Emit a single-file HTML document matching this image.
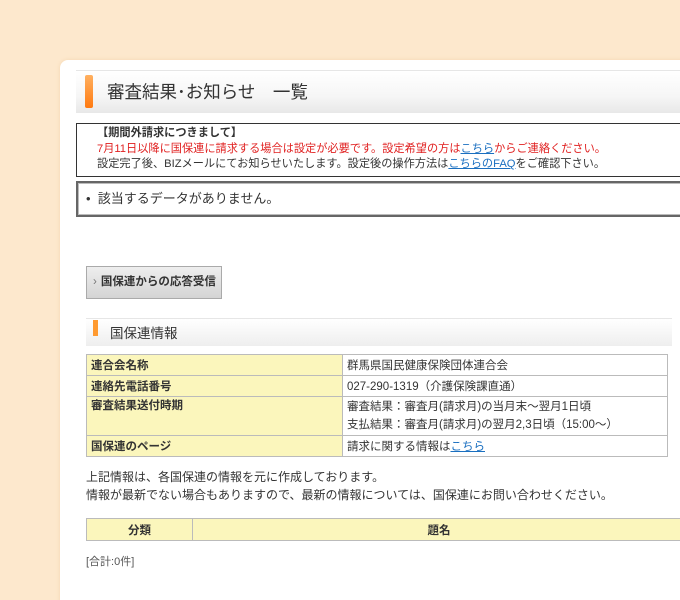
<!DOCTYPE html>
<html style="overflow:hidden"><head><meta charset="utf-8"><style>
body{margin:0;width:680px;height:600px;overflow:hidden;background:#fde8cd;font-family:"Liberation Sans","Noto Sans CJK JP",sans-serif;color:#333;position:relative}
.p{position:absolute;left:60px;top:60px;width:640px;height:560px;background:#fff;border-radius:8px;box-shadow:0 0 4px #f3d6b0}
.a{position:absolute}
.hd{left:76px;top:70px;width:604px;height:42px;background:linear-gradient(#fff,#f6f6f6 60%,#e8e8e8);border-top:1px solid #e6e6e6}
.ob{left:85px;top:75px;width:8px;height:33px;background:linear-gradient(#ffb060,#ff7a10);border-radius:2px}
.t{left:107px;top:79px;font-size:17.5px;color:#333}
.nb{left:76px;top:123px;width:604px;height:52px;border:1px solid #333;border-right:none;font-size:11.2px;line-height:15.5px}
.b2{left:76px;top:181px;width:604px;height:32px;border:2px solid #666;border-right:none;box-shadow:inset 0 0 0 1px #bbb;font-size:13px}
a{color:#1a6fc0;text-decoration:underline}
.btn{left:86px;top:266px;width:134px;height:31px;border:1px solid #aaa;background:linear-gradient(#eee,#d4d4d4);font-size:11.5px;font-weight:bold;line-height:31px;color:#333}
.sh{left:86px;top:318px;width:586px;height:27px;background:linear-gradient(#fff,#eee);border-top:1px solid #e6e6e6}
table{border-collapse:collapse;font-size:11.5px}
td{border:1px solid #bbb;padding:0 4px;height:20px}
td.k{background:#fbf6bc;font-weight:bold;width:247px;color:#333}
</style></head><body>
<div class="p"></div>
<div class="a hd"></div><div class="a ob"></div>
<div class="a t">審査結果･お知らせ　一覧</div>
<div class="a nb"><div style="padding:2px 0 0 20px"><b>【期間外請求につきまして】</b><br><span style="color:#e02020">7月11日以降に国保連に請求する場合は設定が必要です。設定希望の方は<a href="#">こちら</a>からご連絡ください。</span><br>設定完了後、BIZメールにてお知らせいたします。設定後の操作方法は<a href="#">こちらのFAQ</a>をご確認下さい。</div></div>
<div class="a b2"><div style="padding:5px 0 0 8px">•&nbsp;&nbsp;該当するデータがありません。</div></div>
<div class="a btn"><span style="font-weight:normal;color:#777;padding:0 4px 0 6px">›</span>国保連からの応答受信</div>
<div class="a sh"></div><div class="a" style="left:93px;top:320px;width:5px;height:16px;background:#ff9a30"></div>
<div class="a" style="left:110px;top:322px;font-size:13.5px">国保連情報</div>
<table class="a" style="left:86px;top:354px;width:582px">
<tr><td class="k">連合会名称</td><td>群馬県国民健康保険団体連合会</td></tr>
<tr><td class="k">連絡先電話番号</td><td>027-290-1319（介護保険課直通）</td></tr>
<tr><td class="k" style="vertical-align:top;height:38px">審査結果送付時期</td><td style="line-height:18px">審査結果：審査月(請求月)の当月末～翌月1日頃<br>支払結果：審査月(請求月)の翌月2,3日頃（15:00～）</td></tr>
<tr><td class="k">国保連のページ</td><td>請求に関する情報は<a href="#">こちら</a></td></tr>
</table>
<div class="a" style="left:86px;top:468px;font-size:12px;line-height:18px">上記情報は、各国保連の情報を元に作成しております。<br>情報が最新でない場合もありますので、最新の情報については、国保連にお問い合わせください。</div>
<table class="a" style="left:86px;top:518px;width:600px">
<tr><td class="k" style="width:97px;text-align:center;height:21px">分類</td><td class="k" style="width:auto;text-align:center">題名</td></tr></table>
<div class="a" style="left:86px;top:553px;font-size:11px;color:#555">[合計:0件]</div>
</body></html>
